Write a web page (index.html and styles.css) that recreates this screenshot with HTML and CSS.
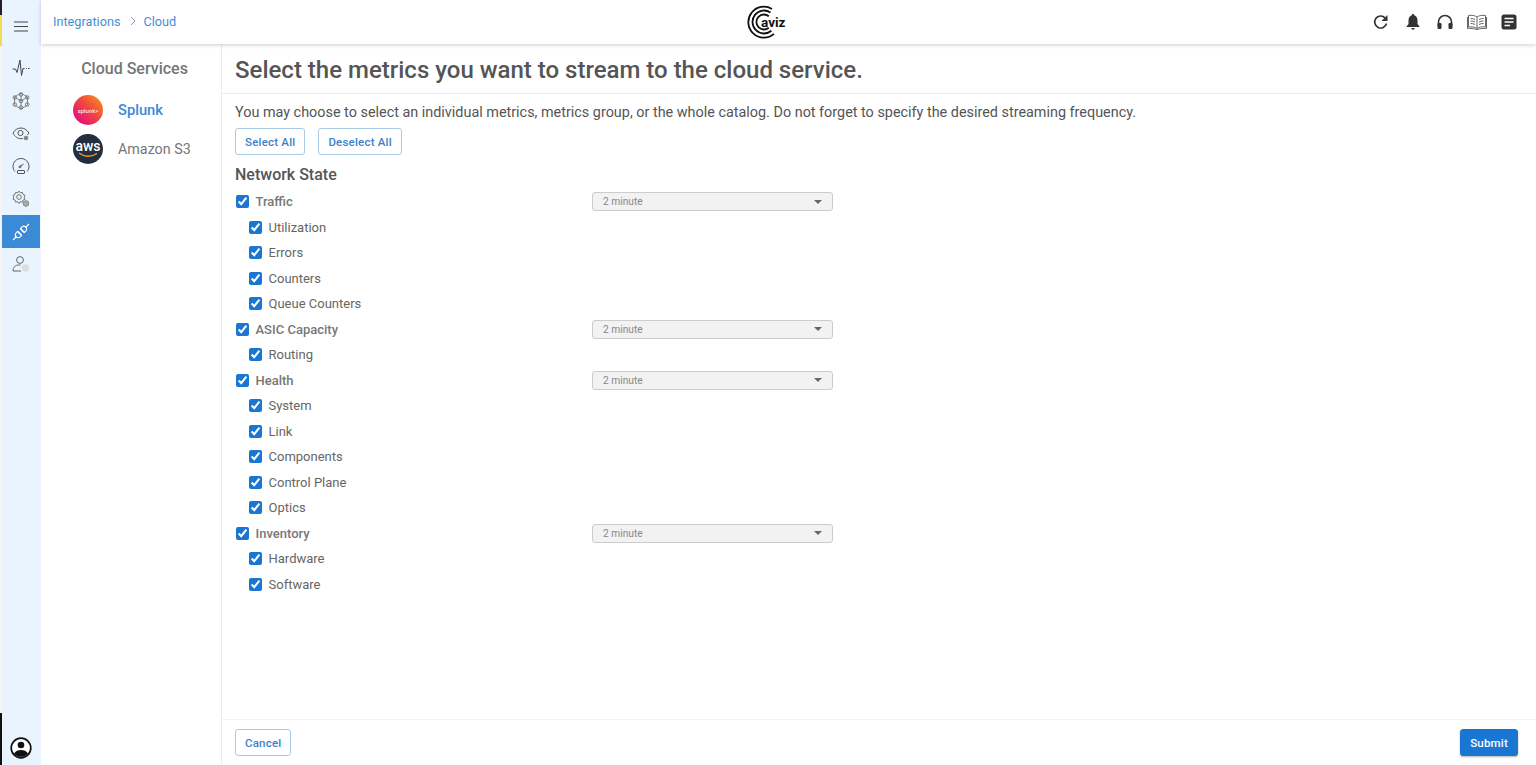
FILE: index.html
```html
<!DOCTYPE html>
<html lang="en">
<head>
  <meta charset="UTF-8">
  <title>Cloud Integrations</title>
  <link rel="stylesheet" href="styles.css">
</head>
<body>
  <div class="app">
    <div class="edge">
      <span class="edge-dark"></span>
      <span class="edge-yellow"></span>
      <span class="edge-fill"></span>
      <span class="edge-black"></span>
    </div>

    <nav class="rail">
      <div class="rail-menu">
        <svg width="14" height="11" viewBox="0 0 14 11"><path d="M0 1h14M0 5.500h14M0 10h14" stroke="#444" stroke-width="1.200" fill="none"/></svg>
      </div>
      <div class="rail-item">
        <svg width="18" height="18" viewBox="0 0 18 18" fill="none" stroke="#444" stroke-width="1"><path d="M0.500 10h3l1.500 3.500 3-12.500 1.500 15.500 1.500-7h1.500M14 9.500h.8M16 9.500h1.500"/></svg>
      </div>
      <div class="rail-item">
        <svg width="18" height="18" viewBox="0 0 18 18" fill="none" stroke="#777" stroke-width="0.900"><path d="M9 1l6.500 4v8L9 17l-6.500-4V5zM9 1v16M2.500 5L9 9l6.500-4"/><circle cx="9" cy="2.500" r="1.800"/><circle cx="2.800" cy="5.500" r="1.800"/><circle cx="15.200" cy="5.500" r="1.800"/><circle cx="2.800" cy="12.500" r="1.800"/><circle cx="15.200" cy="12.500" r="1.800"/><circle cx="9" cy="15.500" r="1.800"/><circle cx="9" cy="9" r="1.800"/></svg>
      </div>
      <div class="rail-item">
        <svg width="18" height="16" viewBox="0 0 18 16" fill="none" stroke="#555" stroke-width="1"><path d="M1 7c2-3.500 5-5 8-5s5.500 1.500 8 5c-.6.9-1.200 1.600-1.900 2.300M11 12.500c-.7.100-1.300.2-2 .2-3 0-6-1.700-8-5.700"/><circle cx="8.500" cy="7" r="2.600"/><circle cx="14" cy="12" r="2.800" fill="#888" stroke="#fff" stroke-width=".8"/></svg>
      </div>
      <div class="rail-item">
        <svg width="18" height="18" viewBox="0 0 18 18" fill="none" stroke="#555" stroke-width="1"><path d="M3 14.500C1.500 13 1 11.500 1 9.500 1 5 4.600 1.500 9 1.500s8 3.500 8 8c0 2-.6 3.500-2 5"/><path d="M8 9.500l3.500-2.500"/><circle cx="8" cy="9.800" r="1"/><rect x="5.500" y="13.500" width="7" height="3" rx=".5"/></svg>
      </div>
      <div class="rail-item">
        <svg width="18" height="18" viewBox="0 0 18 18" fill="none" stroke="#777" stroke-width="1"><circle cx="7" cy="7" r="2.300"/><path d="M7 1l1.200 1.800 2.200-.5.600 2.100 2 .9-.8 2 .8 1.900-2 .9-.6 2.100-2.200-.5L7 13.500l-1.200-1.800-2.200.5-.6-2.100-2-.9.800-1.900-.8-2 2-.9.600-2.100 2.200.5z"/><circle cx="14" cy="13.500" r="2.800" fill="#aaa" stroke="#888"/></svg>
      </div>
      <div class="rail-item active">
        <svg width="18" height="18" viewBox="0 0 18 18" fill="none" stroke="#fff" stroke-width="1.100"><path d="M1 17l3.500-3.500M13.500 4.500L17 1M6 8.500l3.500 3.500M8.500 6l3.500 3.500"/><path d="M5.500 8.500l-1.300 1.300a2.800 2.800 0 0 0 4 4l1.300-1.300zM8.500 5.500l1.300-1.300a2.800 2.800 0 0 1 4 4l-1.300 1.300z"/></svg>
      </div>
      <div class="rail-item">
        <svg width="18" height="18" viewBox="0 0 18 18" fill="none" stroke="#666" stroke-width="1"><circle cx="8" cy="5" r="3.400"/><path d="M1 16c0-4 2.500-6 5.500-6h2M1 16h8"/><circle cx="13.500" cy="13" r="3.300" fill="#ddd" stroke="#ddd"/></svg>
      </div>
      <div class="rail-user">
        <svg width="22" height="22" viewBox="0 0 22 22"><circle cx="11" cy="11" r="9.800" fill="#fff" stroke="#111" stroke-width="1.700"/><circle cx="11" cy="8" r="3.300" fill="#111"/><path d="M4 16.500c1.500-2.500 4-3.500 7-3.500s5.500 1 7 3.500a9 9 0 0 1-14 0z" fill="#111"/></svg>
      </div>
    </nav>

    <div class="content">
      <header class="topbar">
        <div class="crumbs">
          <span>Integrations</span>
          <svg class="crumb-sep" width="8" height="10" viewBox="0 0 8 10"><path d="M2 1l4 4-4 4" fill="none" stroke="#7aa3c9" stroke-width="1"/></svg>
          <span>Cloud</span>
        </div>
        <div class="logo">
          <svg width="34" height="34" viewBox="0 0 34 34" fill="none" stroke="#111" stroke-width="1.800"><path d="M27 28.900A15.500 15.500 0 1 1 25 4"/><path d="M24.400 25.800A11.500 11.500 0 1 1 23.500 7.500"/><path d="M21.800 22.700A7.500 7.500 0 1 1 21.800 11.300"/></svg>
          <span class="logo-text">aviz</span>
        </div>
        <div class="top-icons">
          <span class="top-icon"><svg width="16" height="16" viewBox="0 0 16 16" fill="none"><path d="M13.500 9.500A6 6 0 1 1 12 3.800" stroke="#333" stroke-width="1.700"/><path d="M14.500 1v6h-6z" fill="#333"/></svg></span>
          <span class="top-icon"><svg width="16" height="18" viewBox="0 0 16 18"><path d="M8 1c.8 0 1.200.5 1.200 1.200C11.500 3 12.500 5 12.500 7.500V11l2 2.500v.5h-13v-.5l2-2.500V7.500C3.500 5 4.500 3 6.800 2.200 6.800 1.500 7.200 1 8 1z" fill="#333"/><path d="M6.300 15h3.400a1.700 1.700 0 0 1-3.400 0z" fill="#333"/></svg></span>
          <span class="top-icon"><svg width="16" height="16" viewBox="0 0 16 16" fill="none"><path d="M1.500 12V8a6.500 6.500 0 0 1 13 0v4" stroke="#333" stroke-width="1.600"/><rect x="0.500" y="9" width="4" height="6" rx="1.200" fill="#333"/><rect x="11.500" y="9" width="4" height="6" rx="1.200" fill="#333"/></svg></span>
          <span class="top-icon"><svg width="20" height="16" viewBox="0 0 20 16" fill="none" stroke="#666" stroke-width="1"><path d="M10 3C8 1.500 5 1 1.500 1.500v11.500C5 12.500 8 13 10 14.500 12 13 15 12.500 18.500 13V1.500C15 1 12 1.500 10 3zM10 3v11.500"/><path d="M3.500 4.500c1.500-.1 3 .2 4.500 1M3.500 7c1.500-.1 3 .2 4.500 1M3.500 9.500c1.500-.1 3 .2 4.500 1M16.500 4.500c-1.500-.1-3 .2-4.500 1M16.500 7c-1.500-.1-3 .2-4.500 1M16.500 9.500c-1.500-.1-3 .2-4.500 1"/><path d="M0.500 3v11.500c3-.3 6 0 9.500 1 3.500-1 6.500-1.300 9.500-1V3"/></svg></span>
          <span class="top-icon"><svg width="16" height="16" viewBox="0 0 16 16"><rect x="0.500" y="0.500" width="15" height="15" rx="2.500" fill="#333"/><path d="M3.500 4.500h9M3.500 8h9M3.500 11.500h5.500" stroke="#fff" stroke-width="1.500"/></svg></span>
        </div>
      </header>

      <div class="page">
        <aside class="services">
          <h3>Cloud Services</h3>
          <div class="service selected">
            <span class="badge badge-splunk">splunk&gt;</span>
            <span>Splunk</span>
          </div>
          <div class="service">
            <span class="badge badge-aws">
              aws
              <svg width="20" height="6" viewBox="0 0 20 6" fill="none"><path d="M1 1c5 4 12 4.500 18 .5" stroke="#f29a1f" stroke-width="1.500"/></svg>
            </span>
            <span>Amazon S3</span>
          </div>
        </aside>

        <main class="main">
          <h1>Select the metrics you want to stream to the cloud service.</h1>
          <div class="body">
            <p class="intro">You may choose to select an individual metrics, metrics group, or the whole catalog. Do not forget to specify the desired streaming frequency.</p>
            <div class="actions">
              <button class="btn">Select All</button>
              <button class="btn">Deselect All</button>
            </div>
            <h2>Network State</h2>

            <div class="row group"><label class="check"><input type="checkbox" checked>Traffic</label><div class="freq">2 minute</div></div>
            <div class="row"><label class="check"><input type="checkbox" checked>Utilization</label></div>
            <div class="row"><label class="check"><input type="checkbox" checked>Errors</label></div>
            <div class="row"><label class="check"><input type="checkbox" checked>Counters</label></div>
            <div class="row"><label class="check"><input type="checkbox" checked>Queue Counters</label></div>

            <div class="row group"><label class="check"><input type="checkbox" checked>ASIC Capacity</label><div class="freq">2 minute</div></div>
            <div class="row"><label class="check"><input type="checkbox" checked>Routing</label></div>

            <div class="row group"><label class="check"><input type="checkbox" checked>Health</label><div class="freq">2 minute</div></div>
            <div class="row"><label class="check"><input type="checkbox" checked>System</label></div>
            <div class="row"><label class="check"><input type="checkbox" checked>Link</label></div>
            <div class="row"><label class="check"><input type="checkbox" checked>Components</label></div>
            <div class="row"><label class="check"><input type="checkbox" checked>Control Plane</label></div>
            <div class="row"><label class="check"><input type="checkbox" checked>Optics</label></div>

            <div class="row group"><label class="check"><input type="checkbox" checked>Inventory</label><div class="freq">2 minute</div></div>
            <div class="row"><label class="check"><input type="checkbox" checked>Hardware</label></div>
            <div class="row"><label class="check"><input type="checkbox" checked>Software</label></div>
          </div>
          <footer class="foot">
            <button class="btn">Cancel</button>
            <button class="btn primary">Submit</button>
          </footer>
        </main>
      </div>
    </div>
  </div>
</body>
</html>
```

FILE: styles.css
```css
* {
  box-sizing: border-box;
}
body {
  margin: 0;
  font-family: "Roboto", "Liberation Sans", sans-serif;
  color: #555;
  background-color: #fff;
  overflow: hidden;
}
.app {
  display: flex;
  height: 765px;
}

/* window edge showing through on the far left */
.edge {
  width: 2px;
  display: flex;
  flex-direction: column;
}
.edge-dark {
  height: 15px;
  background-color: #2a1a30;
}
.edge-yellow {
  height: 31px;
  background-color: #f5d94e;
}
.edge-fill {
  flex: 1;
  background-color: #f4f4f4;
}
.edge-black {
  height: 52px;
  background-color: #111;
}

.rail {
  width: 39px;
  background-color: #e9f4fe;
  display: flex;
  flex-direction: column;
  align-items: stretch;
}
.rail-menu {
  height: 44px;
  padding: 9px 1px 0 0;
  display: flex;
  align-items: center;
  justify-content: center;
  margin-bottom: 8px;
}
.rail-item {
  height: 32.700px;
  padding-right: 1px;
  display: flex;
  align-items: center;
  justify-content: center;
}
.rail-item.active {
  margin-right: 1px;
  padding-right: 0;
  background-color: #3b8ad6;
}
.rail-user {
  margin-top: auto;
  height: 34px;
  padding-right: 1px;
  display: flex;
  align-items: center;
  justify-content: center;
}

.content {
  flex: 1;
  min-width: 0;
  display: flex;
  flex-direction: column;
}
.topbar {
  height: 44px;
  flex-shrink: 0;
  display: grid;
  grid-template-columns: 694px auto 1fr;
  align-items: center;
  padding: 0 11px 0 12px;
  box-shadow: 0 1px 4px rgba(0, 0, 0, 0.2);
  position: relative;
}
.crumbs {
  display: flex;
  align-items: center;
  gap: 9px;
  font-size: 12.700px;
  color: #3f8fd8;
  margin-top: -2px;
}
.crumb-sep {
  margin-right: -3px;
}
.logo {
  display: flex;
  align-items: center;
}
.logo-text {
  font-size: 13.500px;
  font-weight: 700;
  color: #111;
  margin-left: -20px;
  margin-top: 1px;
  line-height: 13px;
}
.top-icons {
  display: flex;
  justify-content: flex-end;
  align-items: center;
}
.top-icon {
  width: 32px;
  display: flex;
  justify-content: center;
}

.page {
  flex: 1;
  min-height: 0;
  display: flex;
}
.services {
  width: 181px;
  flex-shrink: 0;
  border-right: 1px solid #e8ecef;
  padding-top: 15px;
}
.services h3 {
  margin: 0 0 12px;
  padding-left: 7px;
  font-size: 16px;
  font-weight: 500;
  line-height: 20px;
  text-align: center;
  color: #757575;
}
.service {
  display: flex;
  align-items: center;
  gap: 15px;
  height: 38.500px;
  padding-left: 32px;
  font-size: 14.300px;
  color: #777;
}
.service.selected {
  font-weight: 500;
  font-size: 14.700px;
  color: #3b8ad6;
}
.badge {
  width: 30px;
  height: 30px;
  border-radius: 50%;
  flex-shrink: 0;
  display: flex;
  flex-direction: column;
  align-items: center;
  justify-content: center;
  color: #fff;
}
.badge-splunk {
  font-size: 6px;
  font-weight: 400;
  background: linear-gradient(45deg, #e5127e 15%, #f0483e 55%, #fa9a1c 100%);
}
.badge-aws {
  background-color: #232f3e;
  font-size: 14px;
  font-weight: 500;
  line-height: 11px;
  padding-top: 2px;
}
.badge-aws svg {
  display: block;
}

.main {
  flex: 1;
  min-width: 0;
  display: flex;
  flex-direction: column;
}
.main h1 {
  margin: 0;
  height: 50px;
  padding: 11px 0 0 13px;
  font-size: 24px;
  font-weight: 500;
  line-height: 30px;
  color: #555;
  border-bottom: 1px solid #e3f0f8;
}
.body {
  flex: 1;
  padding: 0 13px;
}
.intro {
  margin: 10px 0 0;
  font-size: 14.400px;
  line-height: 18px;
  color: #555;
}
.actions {
  display: flex;
  gap: 13px;
  margin-top: 6px;
}
.btn {
  height: 27px;
  padding: 0 9px;
  font-family: inherit;
  font-size: 11.500px;
  font-weight: 500;
  letter-spacing: 0.200px;
  color: #3b82c8;
  background-color: #fff;
  border: 1px solid #a9cbe8;
  border-radius: 3px;
}
.btn.primary {
  color: #fff;
  background-color: #1976d2;
  border-color: #1976d2;
  box-shadow: 0 1px 2px rgba(0, 0, 0, 0.3);
}
.body h2 {
  margin: 9px 0 3px;
  font-size: 16px;
  font-weight: 500;
  line-height: 22px;
  color: #555;
}
.row {
  display: flex;
  align-items: center;
  height: 25.500px;
  padding-left: 14px;
  font-size: 13px;
  color: #666;
}
.row.group {
  padding-left: 1px;
  font-weight: 500;
  color: #777;
}
.check {
  display: flex;
  align-items: center;
  gap: 6.500px;
  width: 356px;
  flex-shrink: 0;
}
.check input {
  width: 13px;
  height: 13px;
  margin: 0;
  accent-color: #1976d2;
}
.freq {
  width: 241px;
  height: 19px;
  padding: 0 10px;
  display: flex;
  align-items: center;
  justify-content: space-between;
  font-size: 10.200px;
  font-weight: 400;
  color: #888;
  background-color: #f2f2f2;
  border: 1px solid #ccc;
  border-radius: 3px;
}
.freq::after {
  content: "";
  border-left: 4.500px solid transparent;
  border-right: 4.500px solid transparent;
  border-top: 4px solid #666;
}
.foot {
  height: 46px;
  padding: 9px 18px 0 13px;
  display: flex;
  justify-content: space-between;
  align-items: flex-start;
  border-top: 1px solid #eef4f8;
}
```
